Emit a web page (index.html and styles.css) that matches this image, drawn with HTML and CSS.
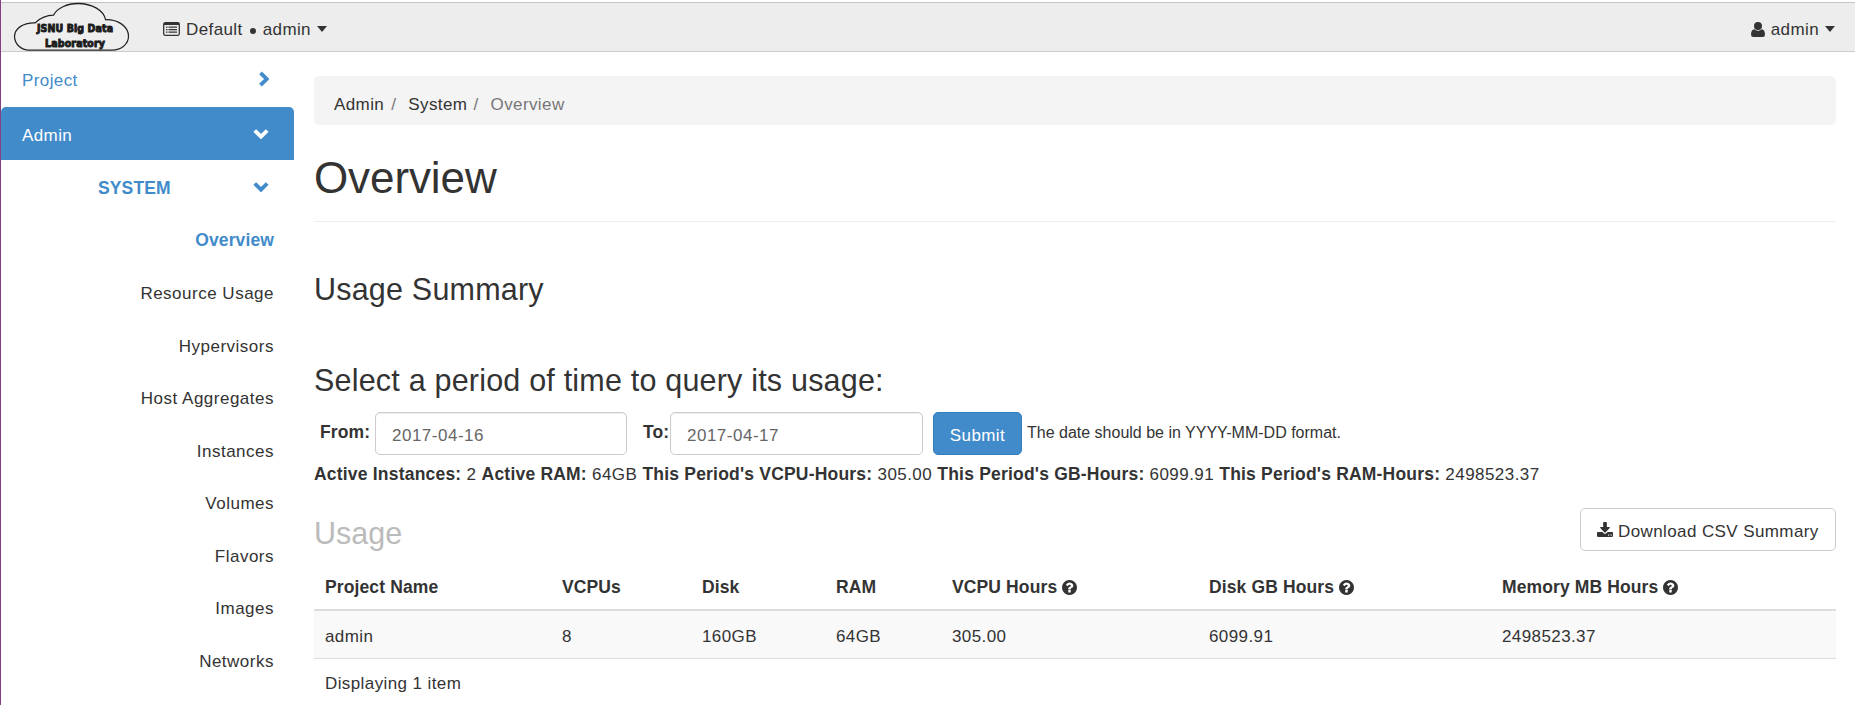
FILE: index.html
```
<!DOCTYPE html>
<html lang="en">
<head>
<meta charset="utf-8">
<title>Usage Overview</title>
<link rel="stylesheet" href="styles.css">
</head>
<body>
<svg width="0" height="0" class="defs">
  <symbol id="help" viewBox="128 128 1536 1536"><path d="M1024 1376v-192q0-14-9-23t-23-9h-192q-14 0-23 9t-9 23v192q0 14 9 23t23 9h192q14 0 23-9t9-23zm256-672q0-88-55.5-163t-138.5-116-170-41q-243 0-371 213-15 24 8 42l132 100q7 6 19 6 16 0 25-12 53-68 86-92 34-24 86-24 48 0 85.500 26t37.500 59q0 38-20 61t-68 45q-63 28-115.500 86.500t-52.500 125.500v36q0 14 9 23t23 9h192q14 0 23-9t9-23q0-19 21.500-49.500t54.500-49.500q32-18 49-28.500t46-35 44.500-48 28-60.500 12.500-81zm384 192q0 209-103 385.500t-279.500 279.500-385.500 103-385.500-103-279.500-279.500-103-385.500 103-385.500 279.500-279.500 385.500-103 385.500 103 279.500 279.500 103 385.500z"/></symbol>
</svg>
<header class="navbar">
  <svg class="logo" width="118" height="50" viewBox="0 0 118 50">
    <path d="M29 47.500C21 47.500 15 42 14.500 35C14.500 27 23 21.500 35 21.800C40 17.500 46 14.500 53.500 14.500C57 8 67 3.500 78 3.500C92 3.500 104 10 105.500 18.800C118 18.500 128.500 25 128.500 34.500C128.500 42 121 47.500 112 47.500Z" transform="matrix(1 0 0 1.06 -12 -2.2)" fill="#eee" stroke="#222" stroke-width="1.200"/>
    <g class="logo-text"><text x="25" y="30" textLength="76" lengthAdjust="spacing">JSNU Big Data</text><text x="33" y="45" textLength="60" lengthAdjust="spacing">Laboratory</text></g>
  </svg>
  <div class="context">
    <svg width="18" height="14" viewBox="0 0 18 14"><rect x=".7" y=".7" width="15.600" height="12.600" rx="1.500" fill="none" stroke="#333" stroke-width="1.300"/><path d="M1 1h15v2H1zM3 4.500h1.500v1.300H3zM5.500 4.500H14v1.300H5.500zM3 7h1.500v1.300H3zM5.500 7H14v1.300H5.500zM3 9.500h1.500v1.300H3zM5.500 9.500H14v1.300H5.500z" fill="#333"/></svg>
    <span>Default</span><i class="dot"></i><span>admin</span><i class="caret"></i>
  </div>
  <div class="user">
    <svg width="14" height="15" viewBox="0 0 14 15"><path d="M7 0a3.800 3.800 0 0 1 0 8a3.800 3.800 0 0 1 0-8zM3.400 7.200Q7 10.300 10.600 7.200Q14 7.800 14 12.500Q14 15 11.800 15H2.200Q0 15 0 12.500Q0 7.800 3.400 7.200z" fill="#333"/></svg>
    <span>admin</span><i class="caret"></i>
  </div>
</header>
<div class="page">
  <nav class="sidebar">
    <a class="row project"><span>Project</span><svg width="10" height="16" viewBox="0 0 10 16"><path d="M1.500 1.800L7.700 8L1.500 14.200"/></svg></a>
    <a class="row admin"><span>Admin</span><svg width="16" height="10" viewBox="0 0 16 10"><path d="M1.800 1.500L8 7.700L14.200 1.500"/></svg></a>
    <a class="row system"><span>SYSTEM</span><svg width="16" height="10" viewBox="0 0 16 10"><path d="M1.800 1.500L8 7.700L14.200 1.500"/></svg></a>
    <a class="item active">Overview</a>
    <a class="item">Resource Usage</a>
    <a class="item">Hypervisors</a>
    <a class="item">Host Aggregates</a>
    <a class="item">Instances</a>
    <a class="item">Volumes</a>
    <a class="item">Flavors</a>
    <a class="item">Images</a>
    <a class="item">Networks</a>
  </nav>
  <main>
    <div class="breadcrumb"><span>Admin</span><i>/</i><span>System</span><i>/</i><em>Overview</em></div>
    <h1>Overview</h1>
    <h3 class="summary-title">Usage Summary</h3>
    <h3 class="period-title">Select a period of time to query its usage:</h3>
    <form class="period">
      <label class="from">From:</label><input type="text" value="2017-04-16">
      <label class="to">To:</label><input type="text" value="2017-04-17">
      <button type="button" class="submit">Submit</button>
      <small>The date should be in YYYY-MM-DD format.</small>
    </form>
    <p class="totals"><b>Active Instances:</b> 2 <b>Active RAM:</b> 64GB <b>This Period's VCPU-Hours:</b> 305.00 <b>This Period's GB-Hours:</b> 6099.91 <b>This Period's RAM-Hours:</b> 2498523.37</p>
    <div class="table-head">
      <h3>Usage</h3>
      <button type="button" class="download"><svg width="16" height="15" viewBox="64 0 1664 1536"><path fill="#333" d="M1344 1344q0-26-19-45t-45-19-45 19-19 45 19 45 45 19 45-19 19-45zm256 0q0-26-19-45t-45-19-45 19-19 45 19 45 45 19 45-19 19-45zm128-224v320q0 40-28 68t-68 28h-1472q-40 0-68-28t-28-68v-320q0-40 28-68t68-28h465l135 136q58 56 136 56t136-56l136-136h464q40 0 68 28t28 68zm-325-569q17 41-14 70l-448 448q-18 19-45 19t-45-19l-448-448q-31-29-14-70 17-39 59-39h256v-448q0-26 19-45t45-19h256q26 0 45 19t19 45v448h256q42 0 59 39z"/></svg><span>Download CSV Summary</span></button>
    </div>
    <table>
      <colgroup><col class="c1"><col class="c2"><col class="c3"><col class="c4"><col class="c5"><col class="c6"><col></colgroup>
      <thead><tr><th>Project Name</th><th>VCPUs</th><th>Disk</th><th>RAM</th><th>VCPU Hours <svg><use href="#help"/></svg></th><th>Disk GB Hours <svg><use href="#help"/></svg></th><th>Memory MB Hours <svg><use href="#help"/></svg></th></tr></thead>
      <tbody><tr><td>admin</td><td>8</td><td>160GB</td><td>64GB</td><td>305.00</td><td>6099.91</td><td>2498523.37</td></tr></tbody>
      <tfoot><tr><td colspan="7">Displaying 1 item</td></tr></tfoot>
    </table>
  </main>
</div>
</body>
</html>
```
FILE: styles.css
```
* { box-sizing: border-box; }
html, body { margin: 0; height: 705px; overflow: hidden; }
body {
  font: 17px/24px "Liberation Sans", Arial, sans-serif;
  letter-spacing: .4px;
  color: #333;
  background: #fff;
  border-left: 1px solid #84407f;
}
i, em { font-style: normal; }
b, th, .period label, .system, .active { font-weight: bold; font-size: 17.500px; letter-spacing: .12px; }
.defs { display: block; }
.navbar {
  display: flex;
  align-items: flex-start;
  height: 50px;
  margin-top: 2px;
  background: #ededed;
  border-top: 1px solid #c6c3c1;
  border-bottom: 1px solid #ccc;
}
.logo { flex: none; margin: -1px 0 0 11px; overflow: visible; }
.logo-text text {
  font: bold 10.500px "DejaVu Sans Condensed", "DejaVu Sans", sans-serif;
  letter-spacing: 0;
  fill: #1c1c1c;
  stroke: #1c1c1c;
  stroke-width: .9px;
}
.context, .user { display: flex; align-items: center; padding-top: 15px; }
.context { margin-left: 33px; }
.context svg, .user svg { margin-top: -2px; }
.context span:first-of-type { margin-left: 5px; }
.dot { width: 6px; height: 6px; border-radius: 50%; background: #333; margin: 2px 7px 0 7px; }
.caret { border: 5.500px solid transparent; border-width: 6px 5px 0; border-top-color: #333; margin: -2px 0 0 6px; }
.user { margin-left: auto; margin-right: 20px; }
.user span { margin-left: 6px; }
.page { display: flex; }
.sidebar { width: 293px; flex: none; display: flex; flex-direction: column; }
.row { display: flex; align-items: center; justify-content: space-between; height: 52.600px; padding: 0 25px 0 21px; }
.row path { fill: none; stroke: currentColor; stroke-width: 3.800; }
.project { height: 55px; color: #428bca; padding-top: 3px; }
.project svg { margin-top: -5px; }
.admin { height: 53px; color: #fff; background: #428bca; border-radius: 5px 5px 0 0; padding-top: 4px; }
.admin svg { margin-top: -4px; }
.system { color: #428bca; padding-left: 97px; padding-top: 3px; }
.system svg { margin-top: -2px; }
.item { height: 52.500px; line-height: 57px; text-align: right; padding-right: 20px; }
.item:not(.active) { letter-spacing: .5px; }
.active { color: #428bca; line-height: 54px; }
main { width: 1522px; margin-left: 20px; }
.breadcrumb { height: 49px; margin-top: 24px; padding: 17px 20px 0; border-radius: 5px; background: #f4f4f4; }
.breadcrumb i { color: #777; margin: 0 12px 0 7px; }
.breadcrumb i + span + i { margin: 0 12px 0 6px; }
.breadcrumb em { color: #777; }
h1 { margin: 0; height: 97px; padding-top: 28px; border-bottom: 1px solid #eee; font: 44px/50px "Liberation Sans", Arial, sans-serif; letter-spacing: -.1px; }
h3 { margin: 0; font: 30.500px/34px "Liberation Sans", Arial, sans-serif; letter-spacing: .2px; }
.summary-title { margin-top: 50px; }
.period-title { margin-top: 57px; }
.period { display: flex; height: 43px; margin-top: 15px; padding-left: 6px; }
.period label { line-height: 41px; }
.from { width: 55px; }
.to { width: 27px; margin-left: 16px; }
.period input { width: 252px; height: 43px; padding: 4px 16px 0; border: 1px solid #ccc; border-radius: 5px; font: inherit; letter-spacing: .5px; color: #666; box-shadow: inset 0 1px 1px rgba(0,0,0,.075); background: #fff; }
.period .to + input { width: 253px; }
.submit { width: 89px; height: 43px; margin-left: 10px; padding: 4px 0 0; border: 1px solid #357ebd; border-radius: 5px; background: #428bca; color: #fff; font: inherit; letter-spacing: inherit; }
.period small { font-size: 16px; line-height: 41px; letter-spacing: 0; margin-left: 5px; white-space: nowrap; }
.totals { margin: 7px 0 0; white-space: nowrap; letter-spacing: .44px; }
.totals b { letter-spacing: .2px; }
.table-head { display: flex; justify-content: space-between; margin-top: 21px; height: 43px; }
.table-head h3 { color: #bbb; padding-top: 8px; letter-spacing: 0; }
.download { display: flex; align-items: center; width: 256px; height: 43px; padding: 4px 0 0 16px; border: 1px solid #ccc; border-radius: 5px; background: #fff; font: inherit; letter-spacing: .4px; color: #333; white-space: nowrap; }
.download svg { margin: -5px 5px 0 0; }
table { width: 1522px; border-collapse: separate; border-spacing: 0; table-layout: fixed; }
.c1 { width: 237px; }
.c2 { width: 140px; }
.c3 { width: 134px; }
.c4 { width: 116px; }
.c5 { width: 257px; }
.c6 { width: 293px; }
th, td { text-align: left; padding: 0 11px; }
th { height: 60px; padding-top: 14px; border-bottom: 2px solid #ddd; }
th svg { width: 15px; height: 15px; vertical-align: -2px; fill: #333; }
tbody td { height: 48px; padding-top: 4px; background: #f9f9f9; border-bottom: 1px solid #ddd; }
tfoot td { height: 48px; padding-top: 1px; }
```
